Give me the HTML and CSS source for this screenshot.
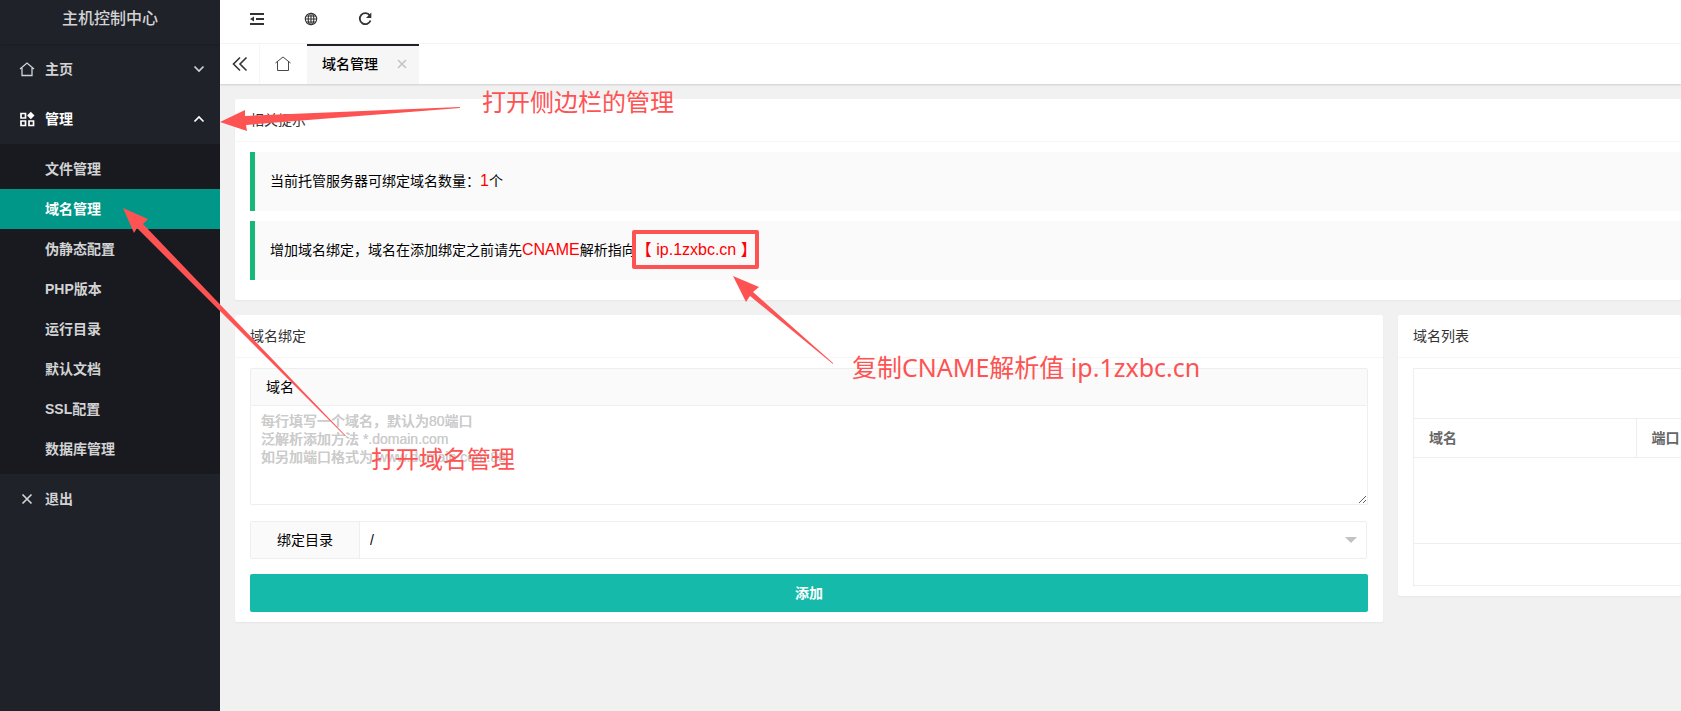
FILE: index.html
```html
<!DOCTYPE html>
<html lang="zh-CN">
<head>
  <meta charset="UTF-8" />
  <meta name="viewport" content="width=device-width, initial-scale=1.0"/>
  <title>主机控制中心</title>
  <link rel="stylesheet" href="styles.css">
</head>
<body>
  <div class="app">
    <aside class="side">
      <div class="logo">主机控制中心</div>
      <nav class="nav">
        <a href="#" class="nav-item">
          <svg class="icon" viewBox="0 0 16 16"><path d="M1 8 8 2l7 6M3 7v7.500h10V7" fill="none" stroke="currentColor" stroke-width="1.300"/></svg>
          <span>主页</span>
          <svg class="arrow" viewBox="0 0 12 12"><path d="M1.500 3.500 6 8l4.500-4.500" fill="none" stroke="currentColor" stroke-width="1.700"/></svg>
        </a>
        <a href="#" class="nav-item open">
          <svg class="icon" viewBox="0 0 16 16"><path d="M2 2.500h4.500V7H2zM2 10h4.500v4.500H2zM10 10h4.500v4.500H10z" fill="none" stroke="currentColor" stroke-width="1.700"/><path d="m11.800.8 3.700 3.700-3.700 3.700-3.700-3.700z" fill="currentColor"/></svg>
          <span>管理</span>
          <svg class="arrow" viewBox="0 0 12 12"><path d="M1.500 8.500 6 4l4.500 4.500" fill="none" stroke="currentColor" stroke-width="1.700"/></svg>
        </a>
        <div class="sub">
          <a href="#">文件管理</a>
          <a href="#" class="active">域名管理</a>
          <a href="#">伪静态配置</a>
          <a href="#">PHP版本</a>
          <a href="#">运行目录</a>
          <a href="#">默认文档</a>
          <a href="#">SSL配置</a>
          <a href="#">数据库管理</a>
        </div>
        <a href="#" class="nav-item">
          <svg class="icon" viewBox="0 0 16 16"><path d="m3.500 3.500 9 9m0-9-9 9" fill="none" stroke="currentColor" stroke-width="1.700"/></svg>
          <span>退出</span>
        </a>
      </nav>
    </aside>

    <div class="main">
      <header class="header">
        <button type="button" class="tool" aria-label="侧边伸缩">
          <svg class="icon" viewBox="0 0 16 16"><path d="M1 3h14M7 8h8M1 13h14" stroke="currentColor" stroke-width="2"/><path d="m1 8 4-2.500v5z" fill="currentColor"/></svg>
        </button>
        <button type="button" class="tool" aria-label="前台">
          <svg class="icon" viewBox="0 0 16 16"><g fill="none" stroke="currentColor" stroke-width="1.100"><circle cx="8" cy="8" r="5.700"/><ellipse cx="8" cy="8" rx="2.800" ry="5.700"/><path d="M8 2v12M2 8h12M3 5h10M3 11h10"/></g></svg>
        </button>
        <button type="button" class="tool" aria-label="刷新">
          <svg class="icon" viewBox="0 0 16 16"><path d="M12.800 4.500A5.500 5.500 0 1 0 13.500 9.500" fill="none" stroke="currentColor" stroke-width="1.800"/><path d="M14.300 1.500V7H9z" fill="currentColor"/></svg>
        </button>
      </header>

      <div class="tabs">
        <button type="button" class="tab-prev" aria-label="向左"><svg class="icon" viewBox="0 0 16 16"><path d="M8 1.500 1.500 8 8 14.500M14.500 1.500 8 8l6.500 6.500" fill="none" stroke="#333" stroke-width="1.600"/></svg></button>
        <a href="#" class="tab-home" aria-label="主页"><svg class="icon" viewBox="0 0 16 16"><path d="M.5 7 8 1l7.500 6M2.500 5.500v9h11v-9" fill="none" stroke="#333" stroke-width=".9"/></svg></a>
        <div class="tab"><span>域名管理</span>
          <button type="button" class="tab-close" aria-label="关闭"><svg viewBox="0 0 10 10"><path d="m1 1 8 8m0-8-8 8" stroke="currentColor" stroke-width="1.500"/></svg></button>
        </div>
      </div>

      <main class="content">
        <section class="card tips">
          <h2 class="card-title">相关提示</h2>
          <div class="card-body">
            <blockquote>当前托管服务器可绑定域名数量：<span class="red">1</span>个</blockquote>
            <blockquote>增加域名绑定，域名在添加绑定之前请先<span class="red">CNAME</span>解析指向<span class="red">【 ip.1zxbc.cn 】</span></blockquote>
          </div>
        </section>

        <section class="card">
          <h2 class="card-title">域名绑定</h2>
          <form class="card-body">
            <div class="field-text">
              <label for="domains">域名</label>
              <textarea id="domains" placeholder="每行填写一个域名，默认为80端口
泛解析添加方法 *.domain.com
如另加端口格式为 www.domain.com:88"></textarea>
            </div>
            <div class="field-select">
              <label for="dir">绑定目录</label>
              <div class="select-wrap">
                <select id="dir"><option>/</option></select>
              </div>
            </div>
            <button type="submit" class="btn">添加</button>
          </form>
        </section>

        <section class="card list">
          <h2 class="card-title">域名列表</h2>
          <div class="card-body">
            <div class="table-view">
              <div class="table-tool"></div>
              <table>
                <thead><tr><th>域名</th><th class="port">端口</th></tr></thead>
              </table>
              <div class="table-empty"></div>
              <div class="table-page"></div>
            </div>
          </div>
        </section>
      </main>
    </div>
  </div>

  <!-- 操作指引 -->
  <div class="guide">
    <svg class="guide-arrows" width="900" height="460" viewBox="0 0 900 460">
      <path d="M220 122 245 110v6l215-9v1l-214 17 1 6z"/>
      <path d="m123 208 25 11-5 5 203 212h-1L137 228l-3 5z"/>
      <path d="m733 276 26 11-6 5 80 71v1l-83-68-4 6z"/>
    </svg>
    <div class="guide-box"></div>
    <p class="guide-text t1">打开侧边栏的管理</p>
    <p class="guide-text t2">打开域名管理</p>
    <p class="guide-text t3">复制CNAME解析值 ip.1zxbc.cn</p>
  </div>
</body>
</html>
```
FILE: styles.css
```css
* {
  box-sizing: border-box;
}
body {
  margin: 0;
  font: 14px/24px "Liberation Sans", "Noto Sans CJK SC", sans-serif;
  color: #000;
  background: #f1f1f1;
  overflow: hidden;
}
a {
  color: inherit;
  text-decoration: none;
}
button {
  border: 0;
  padding: 0;
  background: none;
  font: inherit;
  color: inherit;
  cursor: pointer;
}
.app {
  display: flex;
  min-height: 100vh;
}
.icon {
  width: 16px;
  height: 16px;
}

/* sidebar */
.side {
  flex: 0 0 220px;
  background: #20222a;
  color: #d2d3d4;
}
.logo {
  height: 44px;
  padding-top: 1px;
  line-height: 36px;
  font-size: 16px;
  font-weight: 500;
  text-align: center;
  box-shadow: 0 1px 2px rgba(0, 0, 0, .15);
}
.nav {
  font-weight: 700;
}
.nav-item {
  display: flex;
  align-items: center;
  height: 50px;
  padding: 0 15px 0 19px;
}
.nav-item span {
  flex: 1;
  margin-left: 10px;
}
.nav-item .arrow {
  width: 12px;
  height: 12px;
}
.open,
.sub .active {
  color: #fff;
}
.sub {
  padding: 5px 0;
  background: #191a20;
}
.sub a {
  display: block;
  padding-left: 45px;
  line-height: 40px;
}
.sub .active {
  background: #009688;
}

/* header and tabs */
.main {
  flex: 1;
  min-width: 0;
}
.header {
  display: flex;
  align-items: center;
  gap: 38px;
  height: 44px;
  padding: 0 29px 6px;
  background: #fff;
  border-bottom: 1px solid #f6f6f6;
  color: #333;
}
.tool,
.tab-prev,
.tab-home,
.tab-close {
  display: flex;
  align-items: center;
  justify-content: center;
}
.tabs {
  display: flex;
  height: 40px;
  background: #fff;
  box-shadow: 0 1px 2px rgba(0, 0, 0, .15);
}
.tab-prev {
  width: 40px;
  border-right: 1px solid #f6f6f6;
}
.tab-home {
  width: 47px;
  padding-right: 1px;
}
.tab {
  display: flex;
  align-items: center;
  gap: 19px;
  padding: 0 12px 2px 15px;
  background: #f6f6f6;
  border-top: 2px solid #20222a;
  font-weight: 500;
}
.tab-close {
  color: #c2c2c2;
}
.tab-close svg {
  width: 10px;
  height: 10px;
}

/* content */
.content {
  display: grid;
  grid-template-columns: 1fr 283px;
  align-items: start;
  gap: 15px;
  padding: 15px 0 15px 15px;
}
.card {
  background: #fff;
  border-radius: 2px;
  box-shadow: 0 1px 2px rgba(0, 0, 0, .05);
}
.tips {
  grid-column: 1 / -1;
  padding-bottom: 10px;
}
.card-title {
  margin: 0;
  padding: 0 15px;
  font-size: 14px;
  font-weight: 400;
  line-height: 42px;
  color: #333;
  border-bottom: 1px solid #f6f6f6;
}
.card-body {
  padding: 10px 15px;
}
.tips .card-body {
  padding-right: 0;
}
blockquote {
  margin: 0 0 10px;
  padding: 15px;
  line-height: 29px;
  background: #fafafa;
  border-left: 5px solid #16b777;
}
blockquote:last-child {
  margin-bottom: 0;
}
.red {
  font-size: 16px;
  line-height: 16px;
  color: #f00;
}

/* bind form */
.field-text label {
  display: block;
  height: 38px;
  padding: 0 15px;
  line-height: 36px;
  background: #fafafa;
  border: 1px solid #eee;
  border-radius: 2px 2px 0 0;
}
textarea {
  display: block;
  width: 100%;
  height: 99px;
  padding: 6px 10px;
  font: 500 14px/18px "Liberation Sans", "Noto Sans CJK SC", sans-serif;
  border: 1px solid #eee;
  border-top: 0;
  border-radius: 0 0 2px 2px;
  resize: vertical;
}
textarea::placeholder {
  color: #ccc;
  text-shadow: 0 0 0 #ccc;
}
.field-select {
  display: flex;
  height: 38px;
  margin: 16px 1px 15px 0;
  border: 1px solid #eee;
  border-radius: 2px;
}
.field-select label {
  width: 109px;
  line-height: 36px;
  text-align: center;
  background: #fafafa;
  border-right: 1px solid #eee;
}
.select-wrap {
  position: relative;
  flex: 1;
}
.select-wrap::after {
  content: "";
  position: absolute;
  top: 15px;
  right: 9px;
  border: 6px solid transparent;
  border-top-color: #c2c2c2;
  border-bottom: 0;
}
select {
  appearance: none;
  width: 100%;
  height: 100%;
  padding: 0 10px;
  border: 0;
  background: none;
  font: inherit;
  color: #000;
}
.btn {
  display: block;
  width: 100%;
  height: 38px;
  font-weight: 700;
  color: #fff;
  background: #16baaa;
  border-radius: 2px;
}

/* domain list */
.list .card-body {
  padding-right: 0;
}
.table-view {
  border: 1px solid #eee;
  border-right: 0;
}
.table-tool {
  height: 50px;
  border-bottom: 1px solid #eee;
}
table {
  width: 100%;
  border-collapse: collapse;
  table-layout: fixed;
}
th {
  height: 38px;
  padding: 0 0 0 15px;
  text-align: left;
  color: #666;
  border-bottom: 1px solid #eee;
}
th.port {
  width: 45px;
  border-left: 1px solid #eee;
}
.table-empty {
  height: 86px;
  border-bottom: 1px solid #eee;
}
.table-page {
  height: 41px;
}

/* guide notes drawn over the page */
.guide {
  position: absolute;
  top: 0;
  left: 0;
  pointer-events: none;
  color: #fe5353;
}
.guide-arrows {
  display: block;
  fill: currentColor;
}
.guide-box {
  position: absolute;
  top: 230px;
  left: 632px;
  width: 127px;
  height: 39px;
  border: 4px solid;
  border-radius: 2px;
}
.guide-text {
  position: absolute;
  margin: 0;
  font: 24px/32px "Noto Sans", "Noto Sans CJK SC", sans-serif;
  white-space: nowrap;
}
.t1 {
  top: 86px;
  left: 482px;
}
.t2 {
  top: 443px;
  left: 371px;
}
.t3 {
  top: 351px;
  left: 852px;
  font-size: 25px;
}
```
